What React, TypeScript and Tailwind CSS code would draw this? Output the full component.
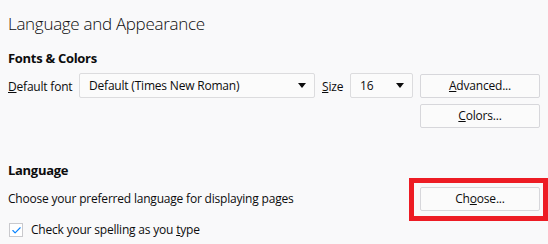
import { Check } from "lucide-react";

function Caret() {
  return (
    <svg width="8" height="5" viewBox="0 0 8 5" className="shrink-0">
      <path d="M0 0h8L4 5z" fill="#0c0c0d" />
    </svg>
  );
}

function Select({ value, width }: { value: string; width: string }) {
  return (
    <div
      className={`flex h-[25px] shrink-0 items-center justify-between rounded-[2px] border border-[#dcdcde] bg-[#fbfbfb] pl-[9px] pr-[8px] ${width}`}
    >
      <span>{value}</span>
      <Caret />
    </div>
  );
}

function Button({ children }: { children: React.ReactNode }) {
  return (
    <div className="flex h-[24px] w-[120px] items-center justify-center rounded-[2px] border border-[#d7d7db] bg-[#fbfbfb]">
      {children}
    </div>
  );
}

export default function App() {
  return (
    <div
      className="h-[244px] w-[548px] overflow-hidden whitespace-nowrap bg-[#f9f9fa] px-2 text-[12px] leading-[18px] tracking-[-0.2px] text-[#0c0c0d]"
      style={{ fontFamily: '"Segoe UI", "Open Sans", sans-serif' }}
    >
      <h1 className="pt-[12px] text-[17px] font-light leading-[24px] tracking-[-0.3px]">
        Language and Appearance
      </h1>

      <h2 className="mt-[13px] text-[13px] font-bold leading-[18px] tracking-[-0.3px]">
        Fonts &amp; Colors
      </h2>

      <div className="mt-[6px] flex items-start">
        <span className="mt-[5px] w-[71px] shrink-0">
          <u>D</u>efault font
        </span>
        <Select value="Default (Times New Roman)" width="w-[236px]" />
        <span className="mt-[5px] w-[35px] shrink-0 pl-[7px]">
          <u>S</u>ize
        </span>
        <Select value="16" width="w-[63px]" />
        <div className="ml-auto mt-px flex flex-col gap-[6px]">
          <Button>
            <span>
              <u>A</u>dvanced...
            </span>
          </Button>
          <Button>
            <span>
              <u>C</u>olors...
            </span>
          </Button>
        </div>
      </div>

      <h2 className="mt-[33px] text-[13px] font-bold leading-[18px] tracking-[-0.3px]">Language</h2>

      <div className="mt-[8px] flex items-center justify-between">
        <span>Choose your preferred language for displaying pages</span>
        <div className="relative">
          <Button>
            <span>
              Ch<u>o</u>ose...
            </span>
          </Button>
          <div className="pointer-events-none absolute -bottom-[10px] -left-[11px] -right-[8px] -top-[9px] border-[5px] border-[#ed1c24]" />
        </div>
      </div>

      <div className="mt-[10px] flex items-center">
        <div className="ml-px flex h-[14px] w-[14px] items-center justify-center border border-[#c9c9cd] bg-white">
          <Check size={11} strokeWidth={2.5} color="#0a84ff" />
        </div>
        <span className="ml-[8px]">
          Check your spelling as you <u>t</u>ype
        </span>
      </div>
    </div>
  );
}
